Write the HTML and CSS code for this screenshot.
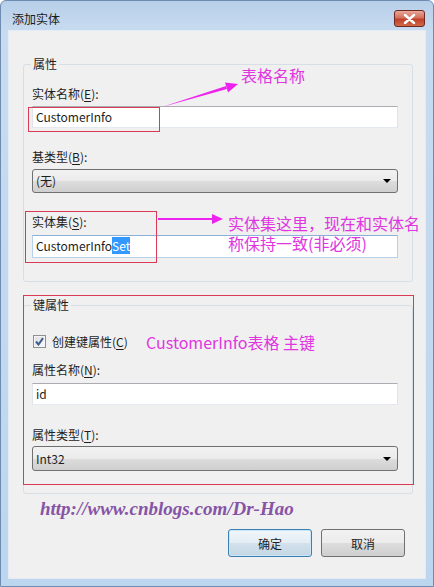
FILE: index.html
```html
<!DOCTYPE html>
<html lang="zh-CN">
<head>
  <meta charset="UTF-8" />
  <title>添加实体</title>
  <link rel="stylesheet" href="styles.css">
</head>
<body>
  <div class="screen">
    <div class="window">
      <div class="titlebar">
        <span class="title">添加实体</span>
        <span class="close">
          <svg width="13" height="10" viewBox="0 0 13 10"><path d="M2 1 L11 9 M11 1 L2 9" stroke="#fff" stroke-width="2.4" stroke-linecap="round"/></svg>
        </span>
      </div>

      <div class="client">
        <fieldset class="group">
          <legend>属性</legend>

          <div class="field">
            <label>实体名称(<u>E</u>):</label>
            <div class="textbox">CustomerInfo</div>
          </div>

          <div class="field">
            <label>基类型(<u>B</u>):</label>
            <div class="combo">(无)<span class="drop"></span></div>
          </div>

          <div class="field">
            <label class="tight">实体集(<u>S</u>):</label>
            <div class="textbox focus">CustomerInfo<span class="sel">Set</span></div>
          </div>
        </fieldset>

        <fieldset class="group key">
          <legend>键属性</legend>

          <div class="check-row">
            <span class="checkbox">
              <svg width="9" height="9" viewBox="0 0 9 9"><path d="M1 4.5 L3.5 7.5 L8 1.2" fill="none" stroke="#3f5d8f" stroke-width="2"/></svg>
            </span>
            <span>创建键属性(<u>C</u>)</span>
          </div>

          <div class="field">
            <label class="tight">属性名称(<u>N</u>):</label>
            <div class="textbox">id</div>
          </div>

          <div class="field wide">
            <label class="short">属性类型(<u>T</u>):</label>
            <div class="combo tall">Int32<span class="drop"></span></div>
          </div>
        </fieldset>

        <div class="blog">http://www.cnblogs.com/Dr-Hao</div>

        <div class="buttons">
          <button class="default">确定</button>
          <button>取消</button>
        </div>
      </div>
    </div>

    <!-- annotations drawn over the dialog -->
    <div class="mark mark-name"></div>
    <div class="mark mark-set"></div>
    <div class="mark mark-key"></div>

    <svg class="arrows" width="434" height="587">
      <polygon points="162,107 226.9,89 226.1,86" fill="#ee22ee"/>
      <polygon points="238,84 228,92.5 225,82.5" fill="#ee22ee"/>
      <rect x="158" y="218" width="56" height="2" fill="#ee22ee"/>
      <polygon points="223,219 212,214 212,224" fill="#ee22ee"/>
    </svg>

    <div class="note note-name">表格名称</div>
    <div class="note note-set">实体集这里，现在和实体名<br>称保持一致(非必须)</div>
    <div class="note note-key">CustomerInfo表格 主键</div>
  </div>
</body>
</html>
```

FILE: styles.css
```css
* {
  box-sizing: border-box;
}

body {
  margin: 0;
  font-family: "Noto Sans CJK SC", "Noto Sans", sans-serif;
  font-size: 12px;
  color: #1e1e1e;
}

.screen {
  position: relative;
  width: 434px;
  height: 587px;
  overflow: hidden;
}

.window {
  width: 434px;
  height: 587px;
  display: flex;
  flex-direction: column;
  background: linear-gradient(#b7cfe9, #c8dbf0 30px, #bcd6ef);
  border: 1px solid #6d8cb0;
  border-radius: 6px 6px 0 0;
  padding: 0 7px 7px;
}

.titlebar {
  height: 29px;
  display: flex;
  align-items: flex-start;
}

.title {
  margin: 10px 0 0 4px;
  line-height: 16px;
  color: #1b1b1b;
}

.close {
  margin: 9px 1px 0 auto;
  width: 31px;
  height: 17px;
  display: flex;
  align-items: center;
  justify-content: center;
  border: 1px solid #6e2a22;
  border-radius: 3px;
  background: linear-gradient(#e9a899, #d4705e 45%, #c2402b 55%, #cf6a45);
}

.client {
  flex: 1;
  background: #f0f0f0;
  border: 1px solid #e3ecf6;
  padding: 25px 12px 0 14px;
}

.group {
  margin: 0;
  border: 1px solid #d5dfe5;
  border-radius: 3px;
  padding: 14px 14px 23px 8px;
}

.group legend {
  padding: 0 2px;
  margin-left: -1px;
  line-height: 16px;
}

.group.key {
  margin-top: 15px;
  padding-top: 20px;
  padding-bottom: 22px;
}

.field {
  margin-top: 21px;
}

.field:first-of-type {
  margin-top: 0;
}

.check-row + .field {
  margin-top: 13px;
}

.field.wide {
  margin-top: 22px;
}

.field label {
  display: block;
  line-height: 16px;
  margin-bottom: 4px;
}

.field label.tight {
  margin-bottom: 5px;
}

.field label.short {
  margin-bottom: 3px;
}

u {
  text-decoration-thickness: 1px;
  text-underline-offset: 2px;
}

.textbox {
  height: 22px;
  line-height: 20px;
  padding-left: 3px;
  background: #fff;
  border: 1px solid #e2e3ea;
  border-top-color: #abadb3;
  border-bottom-color: #e3e9ef;
  white-space: nowrap;
}

.textbox.focus {
  height: 23px;
  border-color: #b7d1ea;
  border-top-color: #8cb0d8;
}

.sel {
  background: #3399ff;
  color: #fff;
}

.combo {
  position: relative;
  height: 24px;
  line-height: 22px;
  padding-left: 3px;
  border: 1px solid #707070;
  border-radius: 3px;
  background: linear-gradient(#f2f2f2, #ebebeb 50%, #dddddd 50%, #cfcfcf);
}

.combo.tall {
  height: 25px;
  line-height: 23px;
}

.drop {
  position: absolute;
  right: 6px;
  top: 50%;
  margin-top: -2px;
  border-left: 4px solid transparent;
  border-right: 4px solid transparent;
  border-top: 4px solid #000;
}

.check-row {
  display: flex;
  align-items: center;
  gap: 6px;
  height: 16px;
  padding-left: 1px;
}

.checkbox {
  width: 13px;
  height: 13px;
  display: flex;
  align-items: center;
  justify-content: center;
  border: 1px solid #8e8f8f;
  background: linear-gradient(135deg, #dcdcdc, #fbfbfb);
  box-shadow: inset 0 0 0 1px #f4f4f4;
}

.blog {
  margin: 4px 0 0 17px;
  line-height: 22px;
  font-family: "Liberation Serif", serif;
  font-style: italic;
  font-weight: bold;
  font-size: 19px;
  color: #8653a6;
}

.buttons {
  display: flex;
  justify-content: flex-end;
  gap: 9px;
  margin-top: 9px;
  padding-right: 8px;
}

button {
  width: 84px;
  height: 28px;
  font-family: inherit;
  font-size: 12px;
  color: #1e1e1e;
  border: 1px solid #707070;
  border-radius: 3px;
  background: linear-gradient(#f2f2f2, #ebebeb 50%, #dddddd 50%, #cfcfcf);
}

button.default {
  border-color: #3c7fb1;
  background: linear-gradient(#f0f6fa, #e4edf4 50%, #d3e1ec 50%, #c4d6e4);
  box-shadow: inset 0 0 0 1px #cbe6f6;
}

.mark {
  position: absolute;
  border: 1px solid #d93a55;
}

.mark-name {
  left: 28px;
  top: 107px;
  width: 132px;
  height: 25px;
}

.mark-set {
  left: 25px;
  top: 211px;
  width: 132px;
  height: 52px;
}

.mark-key {
  left: 23px;
  top: 295px;
  width: 391px;
  height: 190px;
}

.arrows {
  position: absolute;
  left: 0;
  top: 0;
}

.note {
  position: absolute;
  font-size: 16px;
  line-height: 20px;
  color: #e035e0;
  white-space: nowrap;
}

.note-name {
  left: 241px;
  top: 65px;
}

.note-set {
  left: 228px;
  top: 213px;
}

.note-key {
  left: 146px;
  top: 332px;
}
```
